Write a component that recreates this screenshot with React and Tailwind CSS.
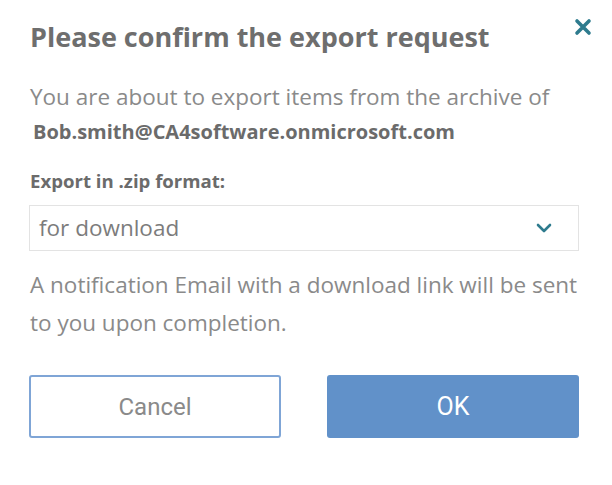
import React from "react";

export default function App() {
  return (
    <div className="w-[612px] h-[485px] bg-white relative font-['Open_Sans',sans-serif]">
      {/* close */}
      <button className="absolute left-[572px] top-[16px] w-[22px] h-[22px] flex items-center justify-center">
        <svg width="18" height="18" viewBox="0 0 18 18">
          <path d="M3 3 L15 15 M15 3 L3 15" stroke="#2e7b8e" strokeWidth="3.6" strokeLinecap="round" />
        </svg>
      </button>

      <div className="pl-[30px] pr-[33px] pt-[18px]">
        <h2 className="text-[27px] leading-[37px] font-bold text-[#6e6e6e]">
          Please confirm the export request
        </h2>
        <p className="mt-[27px] text-[22.5px] leading-[30px] text-[#8a8a8a]">
          You are about to export items from the archive of
        </p>
        <p className="mt-[7px] ml-[3px] text-[20px] leading-[26px] font-bold text-[#6b6b6b]">
          Bob.smith@CA4software.onmicrosoft.com
        </p>

        <p className="mt-[23px] text-[18.6px] leading-[26px] font-bold text-[#6b6b6b]">
          Export in .zip format:
        </p>
        <div className="mt-[11px] -ml-px h-[46px] border border-[#e3e3e3] flex items-center justify-between pl-[9px] pr-[26px]">
          <span className="text-[22.5px] text-[#7c7c7c]">for download</span>
          <svg width="16" height="10" viewBox="0 0 16 10">
            <path d="M2 2 L8 8 L14 2" fill="none" stroke="#2e7b8e" strokeWidth="2.6" strokeLinecap="round" strokeLinejoin="round" />
          </svg>
        </div>

        <p className="mt-[15px] text-[22.5px] leading-[38px] text-[#8a8a8a]">
          A notification Email with a download link will be sent to you upon completion.
        </p>

        <div className="mt-[33px] -ml-px flex gap-[46px]">
          <button className="w-[252px] h-[63px] rounded-[3px] border-2 border-[#7fa5d6] bg-white text-[24px] text-[#8a8a8a] font-['Roboto',sans-serif]">
            Cancel
          </button>
          <button className="w-[252px] h-[63px] rounded-[3px] bg-[#6191c9] text-[25px] text-white font-['Roboto',sans-serif]">
            OK
          </button>
        </div>
      </div>
    </div>
  );
}
